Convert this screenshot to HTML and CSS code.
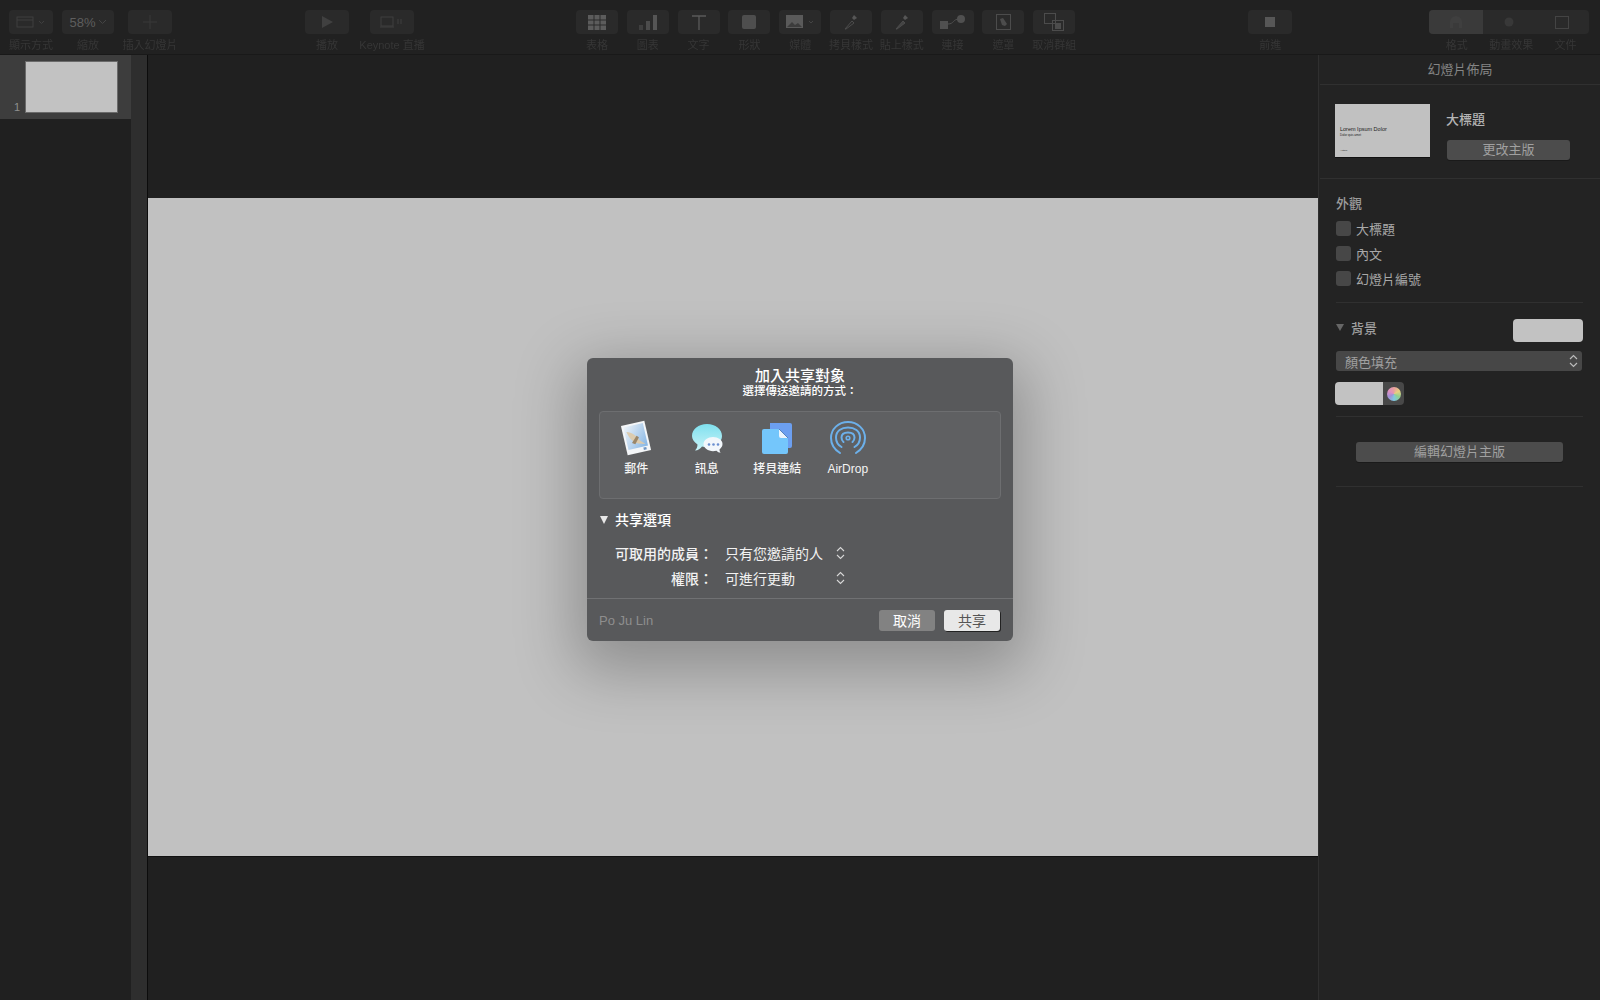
FILE: index.html
```html
<!DOCTYPE html>
<html lang="zh-Hant">
<head>
  <meta charset="UTF-8">
  <title>Keynote</title>
  <link rel="stylesheet" href="styles.css">
</head>
<body>

  <div class="toolbar">
    <div class="group group-view">
      <div class="tool tool-wide"><div class="btn"><svg width="30" height="14" viewBox="0 0 30 14"><rect x="1" y="2" width="16" height="10" fill="none" stroke="#3f3f3f"/><path d="M1 5h16M23 6l2.500 2.500L28 6" fill="none" stroke="#3f3f3f"/></svg></div><span>顯示方式</span></div>
      <div class="tool tool-zoom"><div class="btn btn-zoom"><em>58%</em><svg width="9" height="6" viewBox="0 0 9 6"><path d="M1 1l3.500 3.500L8 1" fill="none" stroke="#444"/></svg></div><span>縮放</span></div>
      <div class="tool tool-wide tool-add"><div class="btn"><svg width="14" height="14" viewBox="0 0 14 14"><path d="M7 0v14M0 7h14" stroke="#383838"/></svg></div><span>插入幻燈片</span></div>
    </div>

    <div class="group group-play">
      <div class="tool tool-wide"><div class="btn"><svg width="14" height="14" viewBox="0 0 14 14"><path d="M2 1l11 6-11 6z" fill="#404040"/></svg></div><span>播放</span></div>
      <div class="tool tool-wide"><div class="btn"><svg width="24" height="14" viewBox="0 0 24 14"><rect x="1" y="2" width="12" height="9" fill="none" stroke="#3f3f3f"/><path d="M0 12h14M18 4v5M21 4v5" stroke="#3f3f3f"/></svg></div><span>Keynote 直播</span></div>
    </div>

    <div class="group group-insert">
      <div class="tool"><div class="btn"><svg width="18" height="15" viewBox="0 0 18 15"><path d="M0 0h18v15H0z" fill="#5c5c5c"/><path d="M0 5h18M0 10h18M6 0v15M12 0v15" stroke="#2a2a2a"/></svg></div><span>表格</span></div>
      <div class="tool"><div class="btn"><svg width="20" height="16" viewBox="0 0 20 16"><path d="M1 11h4v5H1z" fill="#3f3f3f"/><path d="M8 7h4v9H8z" fill="#4c4c4c"/><path d="M15 1h4v15h-4z" fill="#555"/></svg></div><span>圖表</span></div>
      <div class="tool"><div class="btn"><svg width="14" height="15" viewBox="0 0 14 15"><path d="M0 1h14M7 1v14" stroke="#5a5a5a" stroke-width="1.300" fill="none"/></svg></div><span>文字</span></div>
      <div class="tool"><div class="btn"><div class="shape-square"></div></div><span>形狀</span></div>
      <div class="tool"><div class="btn"><svg width="28" height="14" viewBox="0 0 28 14"><rect width="17" height="13" fill="#5a5a5a"/><path d="M1 12l5-5 3 3 3-2 4 4z" fill="#3c3c3c"/><path d="M23 6l2 2 2-2" fill="none" stroke="#444"/></svg></div><span>媒體</span></div>
      <div class="tool"><div class="btn"><svg width="14" height="16" viewBox="0 0 14 16"><path d="M1 15l7-8 2 2-8 6z" fill="none" stroke="#4c4c4c"/><path d="M8 4l2-3 3 3-3 2z" fill="#565656"/></svg></div><span>拷貝樣式</span></div>
      <div class="tool"><div class="btn"><svg width="14" height="16" viewBox="0 0 14 16"><path d="M1 15l7-8 2 2-8 6z" fill="#444" stroke="#4c4c4c"/><path d="M8 4l2-3 3 3-3 2z" fill="#565656"/></svg></div><span>貼上樣式</span></div>
      <div class="tool"><div class="btn"><svg width="26" height="14" viewBox="0 0 26 14"><rect y="6" width="8" height="8" fill="#505050"/><path d="M8 9c6 0 5-5 11-5" fill="none" stroke="#505050"/><circle cx="21" cy="4" r="4" fill="#505050"/></svg></div><span>連接</span></div>
      <div class="tool"><div class="btn"><svg width="15" height="16" viewBox="0 0 15 16"><rect x=".5" y=".5" width="14" height="15" fill="none" stroke="#4c4c4c"/><path d="M4 5l3-1 4 6-2 2-3-1z" fill="#4c4c4c"/></svg></div><span>遮罩</span></div>
      <div class="tool"><div class="btn"><svg width="20" height="18" viewBox="0 0 20 18"><rect x=".5" y=".5" width="11" height="10" fill="none" stroke="#4c4c4c"/><rect x="8.500" y="7.500" width="11" height="10" fill="none" stroke="#4c4c4c"/><rect x="11" y="10" width="6" height="6" fill="#4c4c4c"/></svg></div><span>取消群組</span></div>
    </div>

    <div class="group group-stop">
      <div class="tool tool-wide"><div class="btn"><div class="stop-square"></div></div><span>前進</span></div>
    </div>

    <div class="group group-tabs">
      <div class="tabs">
        <div class="tab tab-on"><svg width="12" height="14" viewBox="0 0 12 14"><path d="M0 13V7a6 6 0 0 1 12 0v6h-3V8H3v5z" fill="#3f3f3f"/></svg></div>
        <div class="tab"><svg width="12" height="12" viewBox="0 0 12 12"><circle cx="6" cy="6" r="4.500" fill="#383838"/></svg></div>
        <div class="tab"><svg width="14" height="13" viewBox="0 0 14 13"><rect x=".5" y=".5" width="13" height="12" fill="none" stroke="#444"/></svg></div>
      </div>
      <div class="tab-labels"><span>格式</span><span>動畫效果</span><span>文件</span></div>
    </div>
  </div>

  <div class="main">
    <div class="navigator">
      <div class="nav-list">
        <div class="nav-row">
          <span class="nav-num">1</span>
          <div class="nav-thumb"></div>
        </div>
      </div>
      <div class="nav-strip"></div>
    </div>

    <div class="canvas">
      <div class="slide"></div>
    </div>

    <div class="inspector">
      <div class="insp-title">幻燈片佈局</div>

      <div class="insp-section layout-row">
        <div class="layout-thumb">
          <div class="lt-title">Lorem Ipsum Dolor</div>
          <div class="lt-sub">Dolor quis amet</div>
          <div class="lt-foot">Author</div>
        </div>
        <div class="layout-info">
          <div class="layout-name">大標題</div>
          <div class="insp-btn btn-master">更改主版</div>
        </div>
      </div>

      <div class="insp-section look">
        <div class="look-head">外觀</div>
        <label class="check"><i></i>大標題</label>
        <label class="check"><i></i>內文</label>
        <label class="check"><i></i>幻燈片編號</label>
      </div>

      <div class="insp-section bg">
        <div class="bg-head">
          <span class="tri-small"></span>
          <span class="bg-label">背景</span>
          <div class="bg-swatch"></div>
        </div>
        <div class="bg-select">
          <span>顏色填充</span>
          <svg width="9" height="14" viewBox="0 0 9 14"><path d="M1 5l3.500-3.500L8 5M1 9l3.500 3.500L8 9" fill="none" stroke="#bbb" stroke-width="1.200"/></svg>
        </div>
        <div class="well">
          <div class="well-color"></div>
          <div class="well-wheel"><div class="wheel"></div></div>
        </div>
      </div>

      <div class="insp-section edit">
        <div class="insp-btn btn-edit">編輯幻燈片主版</div>
      </div>
    </div>
  </div>

  <div class="sheet">
    <div class="sheet-title">加入共享對象</div>
    <div class="sheet-sub">選擇傳送邀請的方式：</div>

    <div class="services">
      <div class="service">
        <svg width="36" height="36" viewBox="0 0 36 36">
          <defs>
            <linearGradient id="sky" x1="0" y1="0" x2="1" y2="1"><stop offset="0" stop-color="#eef3f8"/><stop offset="1" stop-color="#85b5e4"/></linearGradient>
          </defs>
          <g transform="rotate(-13 18 18)">
            <rect x="6" y="3" width="24" height="30" fill="#f4f6f8"/>
            <rect x="8" y="5" width="20" height="23" fill="url(#sky)"/>
            <path d="M10 10c5 1 9 6 11 11l5 5-7-2c-5-2-8-8-9-14z" fill="#dccbae"/>
            <path d="M13 22l6-6 2 2-5 6z" fill="#9b8668"/>
            <rect x="23" y="29" width="3" height="2.500" fill="#6f96c4"/>
          </g>
        </svg>
        <span>郵件</span>
      </div>
      <div class="service">
        <svg width="36" height="36" viewBox="0 0 36 36">
          <defs>
            <linearGradient id="bubble" x1="0" y1="0" x2="0" y2="1"><stop offset="0" stop-color="#7fe0ee"/><stop offset="1" stop-color="#c8f3f8"/></linearGradient>
          </defs>
          <path d="M18 4c8.500 0 15 5 15 12 0 6-6 11-15 11-2 0-3.500 0-5-.5-1.500 2-4 4-7 4 1.500-1.500 2.500-3.500 2.500-6C5 22 3 19 3 16 3 9 9.500 4 18 4z" fill="url(#bubble)"/>
          <path d="M24 17c5 0 9.500 3 9.500 7 0 2.300-1.300 4.200-3 5.400 0 1.400.5 2.500 1.300 3.400-1.800 0-3.300-.9-4.300-2-1.200.3-2.400.4-3.500.4-5 0-9.500-3-9.500-7.100S19 17 24 17z" fill="#f2f7fb"/>
          <circle cx="20" cy="24.500" r="1.300" fill="#6a8fd0"/><circle cx="24.500" cy="24.500" r="1.300" fill="#6a8fd0"/><circle cx="29" cy="24.500" r="1.300" fill="#6a8fd0"/>
        </svg>
        <span>訊息</span>
      </div>
      <div class="service">
        <svg width="36" height="36" viewBox="0 0 36 36">
          <path d="M11 3h20a2 2 0 0 1 2 2v21a2 2 0 0 1-2 2H11z" fill="#6c9ff0"/>
          <path d="M5 9h15l9 9v14a2 2 0 0 1-2 2H5a2 2 0 0 1-2-2V11a2 2 0 0 1 2-2z" fill="#74c6fb"/>
          <path d="M20 9v7a2 2 0 0 0 2 2h7z" fill="#e9f4fd"/>
          <path d="M20 9l9 9" stroke="#3f6fb0" stroke-width=".8"/>
        </svg>
        <span>拷貝連結</span>
      </div>
      <div class="service">
        <svg width="36" height="36" viewBox="0 0 36 36" fill="none" stroke="#6cb0ea" stroke-width="2" stroke-linecap="round">
          <path d="M10 33C4.500 29.500 1 24.500 1 18 1 9 8.500 2 18 2s17 7 17 16c0 6.500-3.500 11.500-9 15"/>
          <path d="M11.500 27C8 25 6 21.500 6 17.500 6 11 11.500 7.500 18 7.500s12 3.500 12 10c0 4-2 7.500-5.500 9.500"/>
          <path d="M13.500 22C12 20.700 11.500 19 11.500 17.500c0-3.500 3-5 6.500-5s6.500 1.500 6.500 5c0 1.500-.5 3.200-2 4.500"/>
          <circle cx="18" cy="18" r="1.800" stroke-width="1.600"/>
        </svg>
        <span>AirDrop</span>
      </div>
    </div>

    <div class="options-head"><span class="tri"></span>共享選項</div>
    <div class="option">
      <span class="opt-label">可取用的成員：</span>
      <span class="opt-value">只有您邀請的人</span>
      <svg width="9" height="14" viewBox="0 0 9 14"><path d="M1 5l3.500-3.500L8 5M1 9l3.500 3.500L8 9" fill="none" stroke="#d8d8d8" stroke-width="1.100"/></svg>
    </div>
    <div class="option">
      <span class="opt-label">權限：</span>
      <span class="opt-value">可進行更動</span>
      <svg width="9" height="14" viewBox="0 0 9 14"><path d="M1 5l3.500-3.500L8 5M1 9l3.500 3.500L8 9" fill="none" stroke="#d8d8d8" stroke-width="1.100"/></svg>
    </div>

    <div class="sheet-foot">
      <span class="owner">Po Ju Lin</span>
      <button class="sheet-btn btn-cancel">取消</button>
      <button class="sheet-btn btn-share">共享</button>
    </div>
  </div>

</body>
</html>
```

FILE: styles.css
```css
* {
  box-sizing: border-box;
}
html, body {
  height: 100%;
}
body {
  margin: 0;
  background: #202020;
  font-family: "Liberation Sans", "Noto Sans CJK TC", sans-serif;
  overflow: hidden;
  display: flex;
  flex-direction: column;
}

/* toolbar */
.toolbar {
  height: 55px;
  flex: none;
  display: flex;
  align-items: flex-start;
  padding: 10px 0 0 9px;
  background: #212121;
  border-bottom: 1px solid #191919;
}
.group {
  display: flex;
}
.group-view {
  gap: 9px;
}
.tool-add {
  margin-left: 5px;
}
.group-play {
  margin-left: 133px;
  gap: 21px;
}
.group-insert {
  margin-left: 162px;
  gap: 8.800px;
}
.group-stop {
  margin-left: 173px;
}
.group-tabs {
  margin-left: 137px;
  width: 160px;
  flex-direction: column;
}
.tool {
  width: 42px;
  display: flex;
  flex-direction: column;
  align-items: center;
}
.tool-wide {
  width: 44px;
}
.tool-zoom {
  width: 52px;
}
.tool span, .tab-labels span {
  margin-top: 4px;
  font-size: 11px;
  line-height: 14px;
  color: #363636;
  white-space: nowrap;
  filter: blur(0.4px);
}
.btn {
  width: 100%;
  height: 24px;
  flex: none;
  display: flex;
  align-items: center;
  justify-content: center;
  background: #2a2a2a;
  border-radius: 4px;
}
.btn-zoom {
  gap: 2px;
}
.btn-zoom em {
  font-style: normal;
  font-size: 13px;
  color: #5e5e5e;
}
.shape-square {
  width: 14px;
  height: 14px;
  border-radius: 2px;
  background: #4e4e4e;
}
.stop-square {
  width: 10px;
  height: 10px;
  background: #575757;
}
.tabs {
  height: 24px;
  display: flex;
  background: #2a2a2a;
  border-radius: 4px;
  overflow: hidden;
}
.tab {
  flex: 1;
  display: flex;
  align-items: center;
  justify-content: center;
}
.tab-on {
  background: #3a3a3a;
}
.tab-labels {
  display: flex;
  justify-content: space-around;
  padding: 0 2px 0 6px;
}

/* main area */
.main {
  flex: 1;
  display: flex;
  min-height: 0;
}
.navigator {
  width: 148px;
  flex: none;
  display: flex;
  border-right: 1px solid #0c0c0c;
}
.nav-list {
  width: 131px;
  flex: none;
}
.nav-row {
  height: 64px;
  width: 131px;
  padding: 6px 13px 0 25px;
  position: relative;
  background: #3d3d3d;
}
.nav-num {
  position: absolute;
  left: 14px;
  top: 46px;
  font-size: 11px;
  color: #8f8f8f;
}
.nav-thumb {
  width: 93px;
  height: 52px;
  background: #c2c2c2;
  border: 1px solid #6a6a6a;
}
.nav-strip {
  flex: 1;
  background: #2e2e2e;
}
.canvas {
  flex: 1;
  display: flex;
  align-items: center;
  background: #202020;
}
.slide {
  width: 100%;
  height: 659px;
  background: #c1c1c1;
  border-bottom: 1px solid #111;
}

/* inspector */
.inspector {
  width: 282px;
  flex: none;
  background: #232323;
  border-left: 1px solid #2f2f2f;
  padding-left: 1px;
}
.insp-title {
  height: 30px;
  text-align: center;
  font-size: 13px;
  line-height: 29px;
  color: #858585;
  border-bottom: 1px solid #303030;
}
.insp-section {
  margin: 0 17px 0 16px;
  border-bottom: 1px solid #303030;
}
.layout-row {
  margin: 0;
  height: 94px;
  padding: 19px 0 0 15px;
  display: flex;
  gap: 16px;
}
.layout-thumb {
  width: 95px;
  height: 54px;
  padding: 22px 0 0 5px;
  position: relative;
  background: #c1c1c1;
  color: #222;
  border-bottom: 1px solid #111;
}
.lt-title {
  font-size: 5.500px;
  line-height: 7px;
  white-space: nowrap;
}
.lt-sub {
  font-size: 3px;
  line-height: 4px;
  white-space: nowrap;
}
.lt-foot {
  position: absolute;
  left: 5px;
  bottom: 5px;
  font-size: 2.500px;
}
.layout-name {
  font-size: 13px;
  line-height: 16px;
  margin-top: 8px;
  color: #b4b4b4;
  font-weight: 500;
}
.insp-btn {
  height: 20px;
  text-align: center;
  font-size: 13px;
  line-height: 19px;
  color: #a0a0a0;
  background: #4c4c4c;
  border-radius: 3px;
  box-shadow: 0 1px 0 #1a1a1a;
}
.btn-master {
  width: 123px;
  margin: 12px 0 0 1px;
}
.look {
  height: 124px;
  padding-top: 16px;
}
.look-head {
  font-size: 13px;
  line-height: 17px;
  margin-bottom: 4px;
  font-weight: 500;
  color: #9a9a9a;
}
.check {
  height: 25px;
  display: flex;
  align-items: center;
  gap: 5px;
  font-size: 13px;
  color: #a8a8a8;
}
.check i {
  width: 15px;
  height: 15px;
  background: #474747;
  border-radius: 3px;
}
.bg {
  height: 114px;
  padding-top: 15px;
}
.bg-head {
  display: flex;
  align-items: center;
  height: 24px;
}
.tri-small {
  width: 0;
  height: 0;
  margin-bottom: 5px;
  border-left: 4.500px solid transparent;
  border-right: 4.500px solid transparent;
  border-top: 7px solid #666;
}
.bg-label {
  margin: 0 0 5px 7px;
  font-size: 13px;
  font-weight: 500;
  color: #a0a0a0;
}
.bg-swatch {
  width: 70px;
  height: 23px;
  margin-left: auto;
  background: #c2c2c2;
  border-radius: 4px;
}
.bg-select {
  width: 246px;
  height: 20px;
  margin-top: 9px;
  padding: 0 4px 0 9px;
  display: flex;
  align-items: center;
  justify-content: space-between;
  font-size: 13px;
  color: #a0a0a0;
  background: #474747;
  border-radius: 3px;
}
.well {
  width: 69px;
  height: 23px;
  margin: 11px 0 0 -1px;
  display: flex;
  border-radius: 4px;
  overflow: hidden;
}
.well-color {
  width: 48px;
  background: #c2c2c2;
}
.well-wheel {
  flex: 1;
  display: flex;
  align-items: center;
  justify-content: center;
  background: #484848;
}
.wheel {
  width: 14px;
  height: 14px;
  border-radius: 50%;
  background: conic-gradient(#e8a0a0, #e8d080, #90d090, #80c8e0, #a090d8, #e090c0, #e8a0a0);
}
.edit {
  height: 70px;
  padding: 25px 20px 0 20px;
}

/* share sheet, floats over the slide */
.sheet {
  position: absolute;
  left: 587px;
  top: 358px;
  width: 426px;
  height: 283px;
  padding-top: 10px;
  color: #fff;
  background: #58595b;
  border-radius: 6px;
  box-shadow: 0 18px 60px 12px rgba(0, 0, 0, 0.26);
}
.sheet-title {
  text-align: center;
  font-size: 15px;
  line-height: 16px;
  font-weight: 500;
}
.sheet-sub {
  text-align: center;
  font-size: 11.500px;
  line-height: 14px;
  font-weight: 500;
}
.services {
  height: 88px;
  margin: 13px 12px 0 12px;
  padding-top: 8px;
  display: flex;
  background: #5f6062;
  border: 1px solid #6d6e70;
  border-radius: 4px;
}
.service {
  width: 70.500px;
  display: flex;
  flex-direction: column;
  align-items: center;
  font-size: 12px;
  line-height: 16px;
  font-weight: 500;
  color: #f4f4f4;
}
.service svg {
  display: block;
  margin-bottom: 5px;
}
.service:first-child {
  margin-left: 1px;
}
.options-head {
  height: 20px;
  margin: 10px 0 11px 13px;
  display: flex;
  align-items: center;
  gap: 7px;
  font-size: 14px;
  font-weight: 500;
}
.tri {
  width: 0;
  height: 0;
  margin-top: 2px;
  border-left: 4.500px solid transparent;
  border-right: 4.500px solid transparent;
  border-top: 8px solid #e8e8e8;
}
.option {
  height: 25px;
  display: flex;
  align-items: center;
  font-size: 14px;
  color: #f2f2f2;
}
.opt-label {
  width: 126px;
  text-align: right;
  font-weight: 500;
}
.opt-value {
  width: 123px;
  padding-left: 12px;
}
.sheet-foot {
  height: 43px;
  margin-top: 8px;
  padding: 0 13px 0 12px;
  display: flex;
  align-items: center;
  gap: 9px;
  border-top: 1px solid #707173;
}
.owner {
  margin-right: auto;
  font-size: 13px;
  color: #8e8e8e;
}
.sheet-btn {
  width: 56px;
  height: 21px;
  padding: 0;
  border: none;
  border-radius: 3px;
  font-family: inherit;
  font-size: 14px;
}
.btn-cancel {
  color: #fff;
  background: #828282;
}
.btn-share {
  color: #555;
  background: #e8e8e8;
  box-shadow: 1px 1px 0 #222;
}
```
